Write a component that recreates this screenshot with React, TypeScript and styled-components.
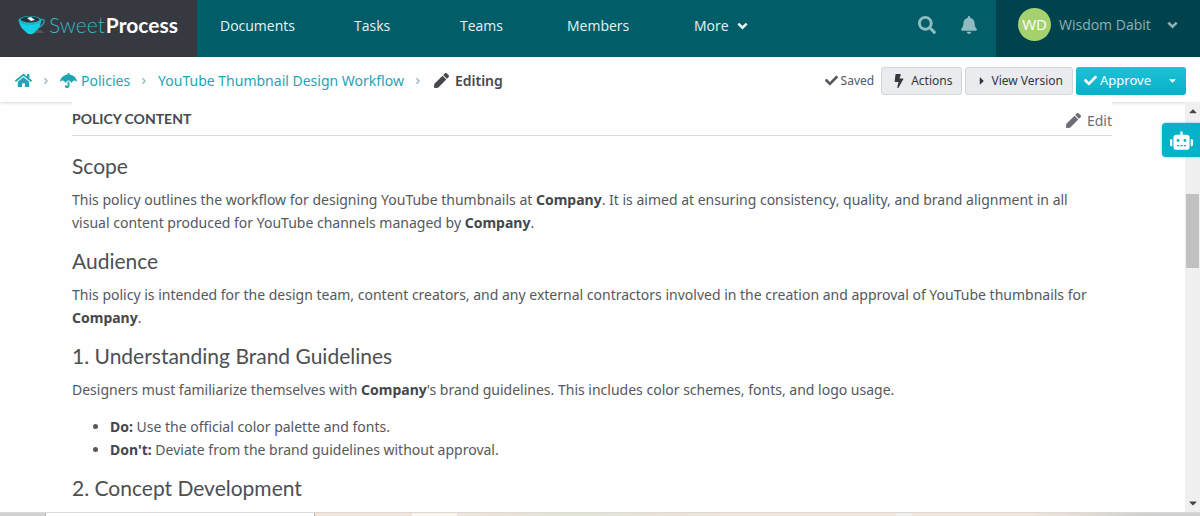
import React from "react";
import styled, { createGlobalStyle } from "styled-components";
import {
  FaAngleRight,
  FaBell,
  FaBolt,
  FaCaretDown,
  FaCaretRight,
  FaCaretUp,
  FaCheck,
  FaHome,
  FaPen,
  FaRobot,
  FaSearch,
  FaUmbrella,
} from "react-icons/fa";

const GlobalStyle = createGlobalStyle`
  *, *::before, *::after { box-sizing: border-box; }
  body {
    margin: 0;
    background: #fefefe;
    color: #55585d;
    font-family: "Noto Sans", "Open Sans", sans-serif;
    font-size: 14px;
    line-height: 23px;
  }
  button { font: inherit; cursor: pointer; }
  a { color: inherit; text-decoration: none; }
  strong { color: #44474c; }
`;

const Page = styled.div`
  display: flex;
  flex-direction: column;
  height: 100vh;
  overflow: hidden;
`;

const TopBar = styled.header`
  display: flex;
  flex: none;
  height: 57px;
  background: #015e69;
  color: #fff;
  font-family: "Open Sans", sans-serif;
`;

const Brand = styled.a`
  display: flex;
  align-items: center;
  width: 197px;
  padding: 0 0 8px 18px;
  background: #363940;
  font-family: Lato, sans-serif;
  font-size: 21px;
`;

const Cup = styled.svg`
  width: 28px;
  height: 22px;
  margin-right: 3px;
`;

const BrandLight = styled.span`
  color: #3bb5c3;
  font-weight: 300;
`;

const BrandBold = styled.span`
  margin-left: 1px;
  font-weight: 700;
`;

const Nav = styled.nav`
  display: grid;
  grid-template-columns: 134px 106px 107px 127px auto;
  align-items: center;
  padding: 0 0 6px 23px;
  color: #e4f4f5;
`;

const NavLink = styled.a`
  display: flex;
  align-items: center;
  gap: 8px;
`;

const Tools = styled.div`
  display: flex;
  align-items: center;
  gap: 24px;
  margin-left: auto;
  padding: 0 18px 8px 0;
`;

const IconButton = styled.button`
  display: flex;
  padding: 0;
  border: 0;
  background: none;
  color: #8fbcc1;
`;

const Account = styled.button`
  display: flex;
  align-items: center;
  width: 204px;
  padding: 0 22px 8px;
  border: 0;
  background: #01434c;
  color: #8fb0b5;
  gap: 8px;
`;

const Avatar = styled.span`
  display: grid;
  place-items: center;
  width: 33px;
  height: 33px;
  border-radius: 50%;
  background: #a6d16f;
  color: #fff;
  font-size: 15px;
`;

const AccountName = styled.span`
  flex: 1;
  text-align: left;
`;

const SubBar = styled.div`
  display: flex;
  flex: none;
  align-items: center;
  height: 45px;
  padding: 2px 14px 0 15px;
  background: #fefefe;
  box-shadow: 0 1px 3px rgba(0, 0, 0, 0.16);
`;

const Crumbs = styled.nav`
  display: flex;
  align-items: center;
  gap: 9px;
  color: #9dc3c7;
`;

const Crumb = styled.a`
  display: flex;
  align-items: center;
  gap: 4px;
  color: #1fa5b3;
`;

const Current = styled.span`
  display: flex;
  align-items: center;
  gap: 6px;
  padding-left: 2px;
  color: #45484d;
  font-weight: 600;
`;

const Actions = styled.div`
  display: flex;
  align-items: center;
  gap: 3px;
  margin-left: auto;
  font-size: 12px;
`;

const Saved = styled.span`
  display: flex;
  align-items: center;
  gap: 3px;
  margin-right: 4px;
`;

const GreyButton = styled.button<{ $gap: number }>`
  display: flex;
  align-items: center;
  gap: ${(p) => p.$gap}px;
  height: 28px;
  padding: 0 9px 0 10px;
  border: 1px solid #d3d6da;
  border-radius: 3px;
  background: #e9ebee;
  color: #34373c;
`;

const Split = styled.div`
  display: flex;
  height: 28px;
  border-radius: 3px;
  overflow: hidden;
  background: linear-gradient(#1fc0d6, #06b1ca);
  font-size: 13px;
`;

const SplitButton = styled.button`
  display: flex;
  align-items: center;
  gap: 3px;
  padding: 0 8px;
  border: 0;
  background: none;
  color: #fff;
`;

const Body = styled.div`
  position: relative;
  display: flex;
  flex: 1;
  min-height: 0;
`;

const Scroller = styled.main`
  flex: 1;
  overflow: hidden;
  padding: 0 73px 0 72px;
`;

const Section = styled.section`
  position: relative;
  background: #fefefe;
`;

const SectionHead = styled.div`
  display: flex;
  justify-content: space-between;
  align-items: center;
  height: 34px;
  margin-bottom: 15px;
  border-bottom: 1px solid #d9dbdd;
`;

const SectionTitle = styled.h2`
  margin: 0;
  color: #464a50;
  font-family: Lato, sans-serif;
  font-size: 14px;
  font-weight: 700;
`;

const EditButton = styled.button`
  display: flex;
  align-items: center;
  gap: 6px;
  padding: 4px 0 0;
  border: 0;
  background: none;
  color: #6b6f75;
`;

const Heading = styled.h3`
  margin: 12px 0 7px;
  color: #4c4f54;
  font-family: Lato, sans-serif;
  font-size: 21px;
  font-weight: 400;
  line-height: 30px;
`;

const Text = styled.p`
  margin: 0;
  padding-right: 12px;
`;

const List = styled.ul`
  margin: 14px 0 0;
  padding-left: 38px;
`;

const ScrollTrack = styled.div`
  display: flex;
  flex-direction: column;
  justify-content: space-between;
  align-items: center;
  width: 15px;
  padding: 3px 0;
  background: #f0f0f0;
  color: #45474a;
  font-size: 12px;
`;

const Thumb = styled.div`
  width: 13px;
  height: 74px;
  margin-bottom: 152px;
  background: #c1c1c1;
`;

const Assistant = styled.button`
  position: absolute;
  top: 21px;
  right: 0;
  display: grid;
  place-items: center;
  width: 38px;
  height: 34px;
  padding: 0;
  border: 0;
  border-radius: 4px 0 0 4px;
  background: #06b1ca;
  box-shadow: 0 0 3px rgba(6, 177, 202, 0.6);
  color: #fff;
`;

const Footer = styled.footer`
  display: flex;
  flex: none;
  height: 4px;
  border-top: 1px solid #dcdad8;
  background: linear-gradient(90deg, #d2d2d2 0 45px, #b4b4b4 45px 46px, #fff 46px 314px, #b4b4b4 314px 315px, #f1e4d8 315px 412px, #faf6ee 412px 457px, #f1e4d8 457px, #e0e3d4 48%, #f1e4d8 60%, #f1e4d8 74.7%, #f1f0ee 74.7% 76%, #f1e4d8 76%, #f1e4d8 86%, #cfd0cf 96%);
`;

function ThickChevron() {
  return (
    <svg width="11" height="10" viewBox="0 0 11 10" aria-hidden="true">
      <path d="M1.300 2.600 L5.500 6.600 L9.700 2.600" fill="none" stroke="currentColor" strokeWidth="2.600" />
    </svg>
  );
}

export default function App() {
  return (
    <Page>
      <GlobalStyle />
      <TopBar>
        <Brand href="#">
          <Cup viewBox="0 0 28 22" aria-hidden="true">
            <path d="M22 6c6-2 5 3 1 6l-3 2" fill="none" stroke="#2796a6" strokeWidth="1.6" />
            <path d="M14 19l12 0-3-3-6-1z" fill="#555358" />
            <path d="M1 6c0 5 3 9 7 12 2 3 7 3 9 0 4-3 6-7 6-12z" fill="#16cfe6" />
            <ellipse cx="12" cy="6.500" rx="11.500" ry="4.500" fill="#17b9cd" />
            <ellipse cx="12" cy="5.500" rx="9.500" ry="2.900" fill="#27323a" />
            <path d="M9 4l4-1 4 3-4 1z" fill="#f4fbfc" />
          </Cup>
          <BrandLight>Sweet</BrandLight>
          <BrandBold>Process</BrandBold>
        </Brand>
        <Nav>
          <NavLink href="#">Documents</NavLink>
          <NavLink href="#">Tasks</NavLink>
          <NavLink href="#">Teams</NavLink>
          <NavLink href="#">Members</NavLink>
          <NavLink href="#">
            More <ThickChevron />
          </NavLink>
        </Nav>
        <Tools>
          <IconButton aria-label="Search">
            <FaSearch size={18} />
          </IconButton>
          <IconButton aria-label="Notifications">
            <FaBell size={18} />
          </IconButton>
        </Tools>
        <Account>
          <Avatar>WD</Avatar>
          <AccountName>Wisdom Dabit</AccountName>
          <ThickChevron />
        </Account>
      </TopBar>
      <SubBar>
        <Crumbs aria-label="Breadcrumb">
          <Crumb href="#" aria-label="Home">
            <FaHome size={17} />
          </Crumb>
          <FaAngleRight size={10} />
          <Crumb href="#">
            <FaUmbrella size={17} /> Policies
          </Crumb>
          <FaAngleRight size={10} />
          <Crumb href="#">YouTube Thumbnail Design Workflow</Crumb>
          <FaAngleRight size={10} />
          <Current>
            <FaPen size={15} /> Editing
          </Current>
        </Crumbs>
        <Actions>
          <Saved>
            <FaCheck size={13} /> Saved
          </Saved>
          <GreyButton $gap={5}>
            <FaBolt size={14} /> Actions
          </GreyButton>
          <GreyButton $gap={3}>
            <FaCaretRight size={12} /> View Version
          </GreyButton>
          <Split>
            <SplitButton>
              <FaCheck size={13} /> Approve
            </SplitButton>
            <SplitButton aria-label="More approval options">
              <FaCaretDown size={11} />
            </SplitButton>
          </Split>
        </Actions>
      </SubBar>
      <Body>
        <Scroller>
          <Section>
            <SectionHead>
              <SectionTitle>POLICY CONTENT</SectionTitle>
              <EditButton>
                <FaPen size={15} /> Edit
              </EditButton>
            </SectionHead>
            <Heading>Scope</Heading>
            <Text>
              This policy outlines the workflow for designing YouTube thumbnails at <strong>Company</strong>. It is
              aimed at ensuring consistency, quality, and brand alignment in all visual content produced for YouTube
              channels managed by <strong>Company</strong>.
            </Text>
            <Heading>Audience</Heading>
            <Text>
              This policy is intended for the design team, content creators, and any external contractors involved in
              the creation and approval of YouTube thumbnails for <strong>Company</strong>.
            </Text>
            <Heading>1. Understanding Brand Guidelines</Heading>
            <Text>
              Designers must familiarize themselves with <strong>Company</strong>'s brand guidelines. This includes
              color schemes, fonts, and logo usage.
            </Text>
            <List>
              <li>
                <strong>Do:</strong> Use the official color palette and fonts.
              </li>
              <li>
                <strong>Don't:</strong> Deviate from the brand guidelines without approval.
              </li>
            </List>
            <Heading>2. Concept Development</Heading>
          </Section>
        </Scroller>
        <ScrollTrack>
          <FaCaretUp />
          <Thumb />
          <FaCaretDown />
        </ScrollTrack>
        <Assistant aria-label="Assistant">
          <FaRobot size={23} />
        </Assistant>
      </Body>
      <Footer />
    </Page>
  );
}
